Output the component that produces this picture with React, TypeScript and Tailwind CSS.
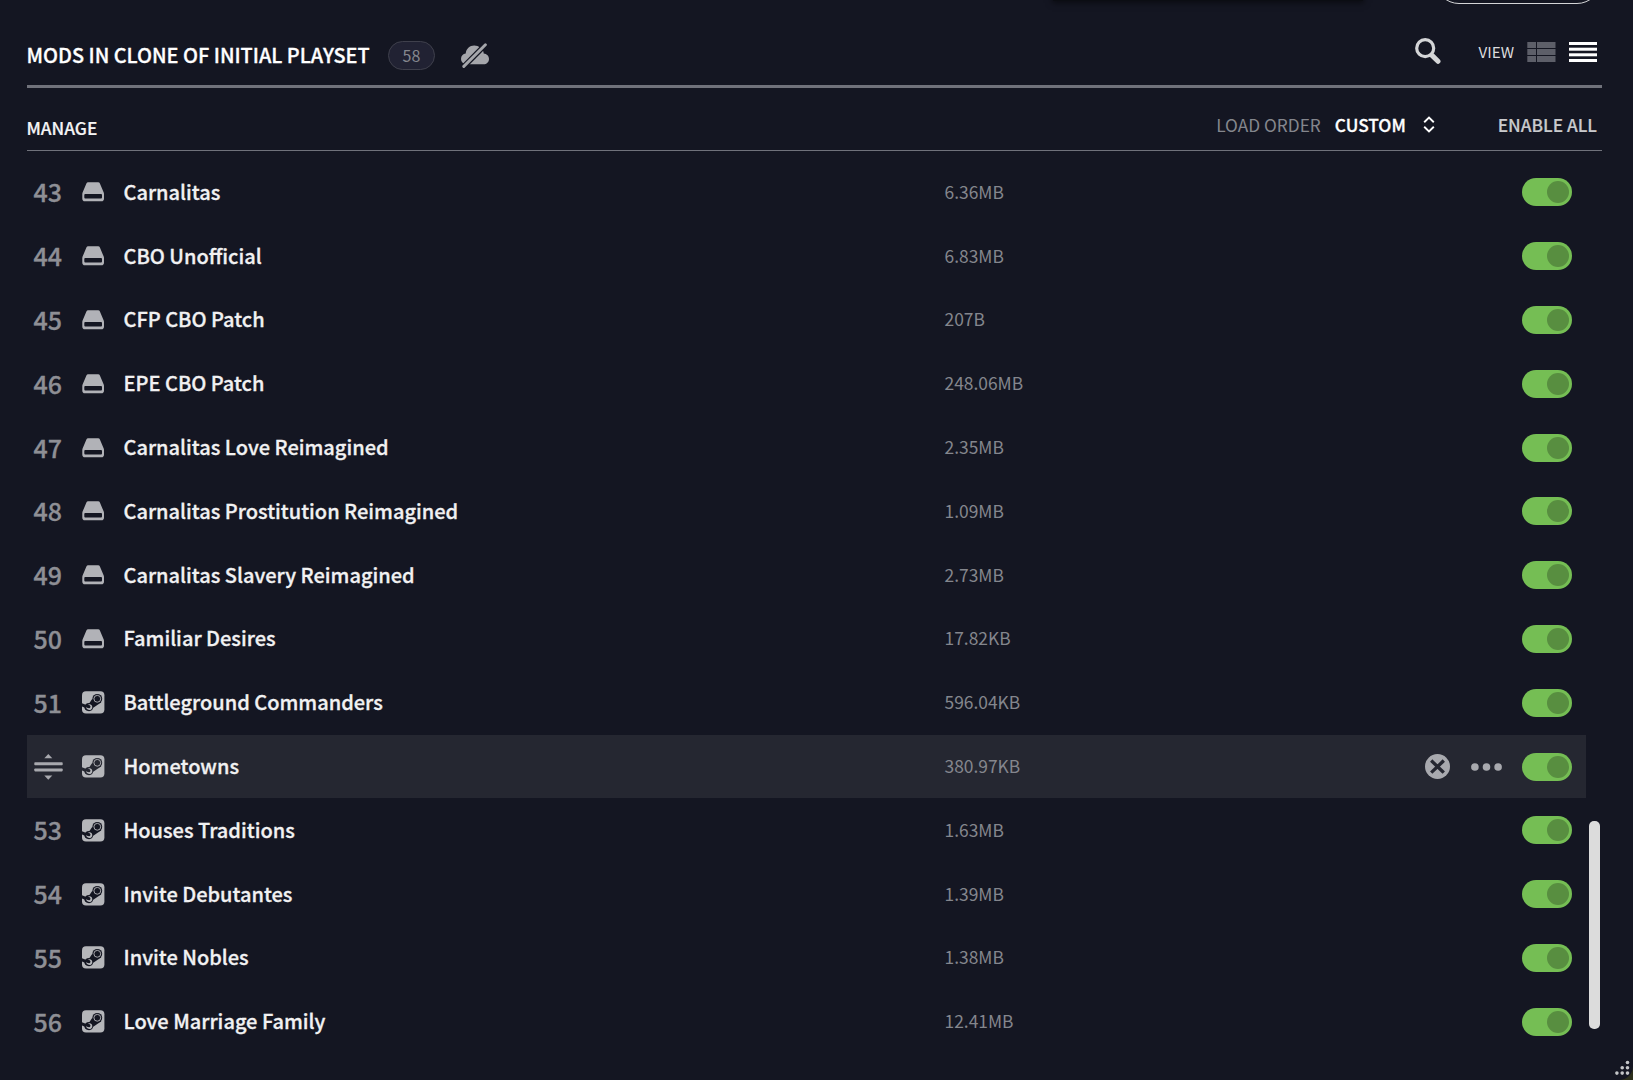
type ModType = {
    position: number
    name: string
    size: string
    source: "local" | "steam"
    hovered?: boolean
}

const mods: ModType[] = [
    { position: 43, name: "Carnalitas", size: "6.36MB", source: "local" },
    { position: 44, name: "CBO Unofficial", size: "6.83MB", source: "local" },
    { position: 45, name: "CFP CBO Patch", size: "207B", source: "local" },
    { position: 46, name: "EPE CBO Patch", size: "248.06MB", source: "local" },
    { position: 47, name: "Carnalitas Love Reimagined", size: "2.35MB", source: "local" },
    { position: 48, name: "Carnalitas Prostitution Reimagined", size: "1.09MB", source: "local" },
    { position: 49, name: "Carnalitas Slavery Reimagined", size: "2.73MB", source: "local" },
    { position: 50, name: "Familiar Desires", size: "17.82KB", source: "local" },
    { position: 51, name: "Battleground Commanders", size: "596.04KB", source: "steam" },
    { position: 52, name: "Hometowns", size: "380.97KB", source: "steam", hovered: true },
    { position: 53, name: "Houses Traditions", size: "1.63MB", source: "steam" },
    { position: 54, name: "Invite Debutantes", size: "1.39MB", source: "steam" },
    { position: 55, name: "Invite Nobles", size: "1.38MB", source: "steam" },
    { position: 56, name: "Love Marriage Family", size: "12.41MB", source: "steam" },
]

function DriveIcon() {
    return (
        <svg width="23" height="20" viewBox="0 0 23 20" className="text-[#b1b2b7]">
            <path
                fill="currentColor"
                fillRule="evenodd"
                d="M6.200.3h9.900c.9 0 1.500.4 1.800 1.200l3.600 8.600c.3.700.5 1.300.5 2v4.300c0 1.700-.9 2.900-2.500 2.900H2.800C1.200 19.300.3 18.100.3 16.400v-4.300c0-.7.2-1.300.5-2L4.400 1.500C4.700.7 5.300.3 6.200.3zM3.200 12.100h15.900c.6 0 .9.400.9.900v2.200c0 .9-.5 1.400-1.200 1.400H3.500c-.7 0-1.200-.5-1.200-1.400v-2.200c0-.5.3-.9.9-.9z"
            />
        </svg>
    )
}

function SteamIcon({ hovered }: { hovered?: boolean }) {
    return (
        <svg
            width="23"
            height="23"
            viewBox="0 0 23 23"
            className={hovered ? "text-[#252731]" : "text-[#141622]"}
            fill="currentColor"
        >
            <rect x="0" y="0.200" width="22.400" height="22.400" rx="4" fill="#b5b6ba" />
            <path d="M0 12.200 3.700 13.800C4.500 13.300 5.700 13 6.700 13L10.200 8l9.200 3.200-7.800 5.200-4 2.900H4.600c-1.200-.6-2-1.600-2.300-2.900L0 15.400z" />
            <circle cx="15.300" cy="7.800" r="4.900" />
            <circle cx="7" cy="16.100" r="4.100" />
            <circle cx="15.300" cy="7.800" r="3.400" fill="none" stroke="#b5b6ba" strokeWidth="0.900" />
            <path d="M3.900 16.300l1.900.8c2.600.9 3.700-2.200 1.500-3.200l-1.300-.5c3-.7 4.700 1.300 4.200 3.500-.6 2.500-4.800 3.200-6.300-.6z" fill="#b5b6ba" />
        </svg>
    )
}

function DragIcon() {
    return (
        <svg width="29" height="28" viewBox="0 0 29 28" className="text-[#a8a9ae]" fill="currentColor">
            <path d="M14.300 1 18.300 5.300h-8z" />
            <rect x="0.300" y="9.300" width="28.400" height="2.900" rx="0.800" />
            <rect x="0.300" y="15.500" width="28.400" height="2.900" rx="0.800" />
            <path d="M14.300 26.700 18.300 22.400h-8z" />
        </svg>
    )
}

function CloudOffIcon() {
    return (
        <svg width="30" height="25" viewBox="0 0 30 25">
            <path
                fill="#a5a6ab"
                d="M6 21.300C3 20.900 1 18.700 1 15.900c0-2.800 2-4.900 4.700-5.300C6.100 5.700 9.700 2.400 14.200 2.400c2.400 0 4.400.8 5.900 2.300 3 2.200 3.500 3.700 3.600 5.800 3.200.4 5.300 2.600 5.300 5.500 0 3.100-2.400 5.300-5.400 5.300z"
            />
            <path d="M26.300.8 3 24.400" stroke="#141622" strokeWidth="5.400" />
            <path d="M25.400 1.800 3.800 23.400" stroke="#a5a6ab" strokeWidth="2.900" strokeLinecap="round" />
        </svg>
    )
}

function SearchIcon() {
    return (
        <svg width="26" height="26" viewBox="0 0 26 26" fill="none" stroke="#d4d5d7">
            <circle cx="10.200" cy="10.200" r="8.500" strokeWidth="3.200" />
            <path d="M17 17.400l6 5.900" strokeWidth="5" strokeLinecap="round" />
        </svg>
    )
}

function GridViewIcon() {
    return (
        <svg width="29" height="20" viewBox="0 0 29 20" fill="#5d5f69">
            {[0, 7, 14].map((y) => (
                <g key={y}>
                    <rect x="0.300" y={y} width="8.700" height="6" />
                    <rect x="10" y={y} width="18.500" height="6" />
                </g>
            ))}
        </svg>
    )
}

function ListViewIcon() {
    return (
        <svg width="28" height="20" viewBox="0 0 28 20" fill="#ffffff">
            {[0, 5.7, 11.3, 17].map((y) => (
                <rect key={y} x="0" y={y} width="28" height="3" />
            ))}
        </svg>
    )
}

function RemoveIcon() {
    return (
        <svg width="25" height="25" viewBox="0 0 25 25">
            <circle cx="12.500" cy="12.500" r="12.500" fill="#a8a9ae" />
            <path d="M7.400 7.700l10.200 9.800M17.600 7.700 7.400 17.500" stroke="#252731" strokeWidth="3.300" strokeLinecap="square" />
        </svg>
    )
}

function Toggle() {
    return (
        <div className="flex h-7 w-[50px] shrink-0 items-center justify-end rounded-full bg-[#75be54] pr-[3px]">
            <div className="size-[22px] rounded-full bg-[#588e40]" />
        </div>
    )
}

function ModRow({ mod }: { mod: ModType }) {
    return (
        <div className={`flex h-[63.800px] items-center pr-[13.500px] ${mod.hovered ? "bg-[#252731]" : ""}`}>
            <div className="flex w-[55px] shrink-0 pl-[7px]">
                {mod.hovered ? (
                    <div><DragIcon /></div>
                ) : (
                    <span className="pb-[2px] text-[25px] leading-7 font-medium text-[#8e8f95] [-webkit-text-stroke:0.3px]">{mod.position}</span>
                )}
            </div>
            <div className="flex w-[42px] shrink-0">
                {mod.source === "local" ? <DriveIcon /> : <SteamIcon hovered={mod.hovered} />}
            </div>
            <div className="w-[821px] shrink-0 pb-px text-[20px] leading-7 font-medium text-[#f1f1f2] [-webkit-text-stroke:0.3px]">{mod.name}</div>
            <div className="grow pb-px text-[17.400px] leading-7 text-[#84868d]">{mod.size}</div>
            {mod.hovered && (
                <div className="flex items-center gap-[21px] pr-5">
                    <RemoveIcon />
                    <svg width="31" height="8" viewBox="0 0 31 8" fill="#a8a9ae">
                        <circle cx="3.900" cy="4" r="3.800" />
                        <circle cx="15.500" cy="4" r="3.800" />
                        <circle cx="27.100" cy="4" r="3.800" />
                    </svg>
                </div>
            )}
            <Toggle />
        </div>
    )
}

export default function App() {
    return (
        <div className="h-[1080px] w-[1633px] overflow-hidden bg-[#2c2f1c] font-['Noto_Sans_CJK_SC',sans-serif]">
            <div className="relative h-full overflow-hidden rounded-br-[14px] bg-[#141622] pl-[26.500px] pr-[31px]">
                {/* bottoms of the panel and the button that are scrolled off above */}
                <div className="absolute -top-10 left-[1053px] h-[41px] w-[310px] bg-[#0b0d13] shadow-[0_1px_6px_1px_rgba(0,0,0,0.5)]" />
                <div className="absolute -top-[44px] left-[1435px] h-12 w-[166px] rounded-full border-[1.500px] border-[#d4d5d7]" />

                <div className="flex h-[87.500px] items-center border-b-[3px] border-[#70727b] pt-[27px]">
                    <h1 className="w-[361.500px] shrink-0 pb-px text-[19.900px] leading-7 font-medium whitespace-nowrap text-white [-webkit-text-stroke:0.3px]">MODS IN CLONE OF INITIAL PLAYSET</h1>
                    <div className="flex h-[29px] w-[47px] items-center justify-center rounded-full border border-[#3f404c] bg-[#212233] pb-[2px] text-[16px] text-[#85878e]">58</div>
                    <div className="pl-[25px]"><CloudOffIcon /></div>
                    <div className="mb-2 ml-auto flex items-center pr-[5px]">
                        <div className="pb-px"><SearchIcon /></div>
                        <span className="pb-[2px] pl-[38px] text-[15.200px] leading-6 text-[#dcdcde]">VIEW</span>
                        <div className="pl-[13px]"><GridViewIcon /></div>
                        <div className="pl-[13px]"><ListViewIcon /></div>
                    </div>
                </div>

                <div className="flex h-[63.500px] items-center border-b border-[#70727b] pt-2">
                    <span className="pt-[11px] text-[17.300px] leading-7 font-medium text-[#f4f4f5] [-webkit-text-stroke:0.2px]">MANAGE</span>
                    <div className="ml-auto flex items-center pt-1 pr-[5px] text-[17.300px] leading-7">
                        <span className="text-[#84868d]">LOAD ORDER</span>
                        <span className="pl-[14px] font-medium text-white [-webkit-text-stroke:0.3px]">CUSTOM</span>
                        <svg width="12" height="17" viewBox="0 0 12 17" fill="none" stroke="#ffffff" strokeWidth="1.900" className="ml-[17px]">
                            <path d="M1.200 6.200 6 1.500l4.800 4.700M1.200 10.800 6 15.500l4.800-4.700" />
                        </svg>
                        <span className="pl-[63px] font-medium text-[#c9cacd] [-webkit-text-stroke:0.2px]">ENABLE ALL</span>
                    </div>
                </div>

                <div className="flex pt-[9.500px]">
                    <div className="w-[1559px]">
                        {mods.map((mod) => (
                            <ModRow mod={mod} key={mod.position} />
                        ))}
                    </div>
                    <div className="mt-[660.500px] ml-[3px] h-[208px] w-[11.500px] rounded-[5px] bg-[#dcdcdc]" />
                </div>

                <svg width="16" height="16" viewBox="0 0 16 16" fill="#c4c5c8" className="absolute right-[3px] bottom-[4px]">
                    <circle cx="13.500" cy="2.500" r="1.800" />
                    <circle cx="8.200" cy="7.800" r="1.800" />
                    <circle cx="13.500" cy="7.800" r="1.800" />
                    <circle cx="2.900" cy="13.100" r="1.800" />
                    <circle cx="8.200" cy="13.100" r="1.800" />
                    <circle cx="13.500" cy="13.100" r="1.800" />
                </svg>
            </div>
        </div>
    )
}
